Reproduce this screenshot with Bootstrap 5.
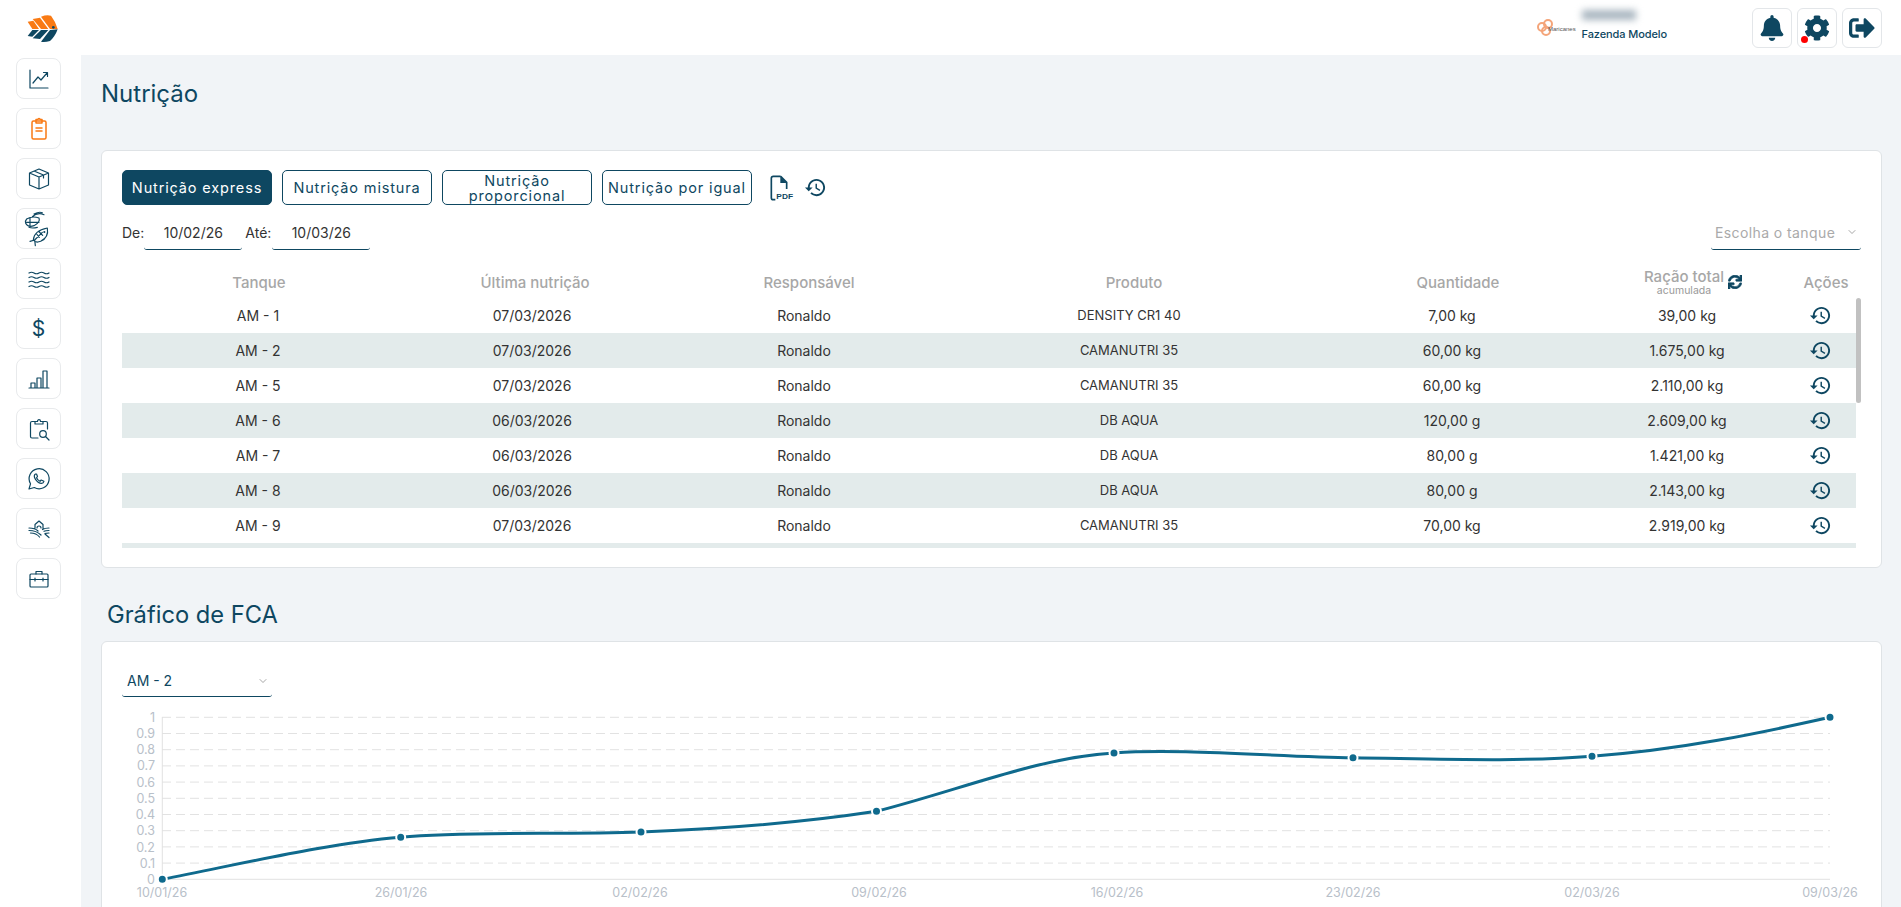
<!DOCTYPE html>
<html lang="pt-BR">
<head>
<meta charset="utf-8">
<title>Nutrição</title>
<link href="https://cdn.jsdelivr.net/npm/bootstrap@5.3.0/dist/css/bootstrap.min.css" rel="stylesheet">
<style>
html,body{height:100%;overflow:hidden}
body{font-family:Inter,"Noto Sans",sans-serif;background:#f1f4f7;color:#333;font-size:14px}
.app-side{width:81px;flex:none;background:#fff;height:100vh}
.side-logo{height:58px;padding:5px 0 0 15px}
.side-btn{width:45px;height:41px;margin:0 0 9px 16px;padding:0;border:1px solid #e8eaec;border-radius:8px;background:#fff;color:#0e4761;font-size:21px;line-height:1}
.side-btn svg{width:26px;height:26px;fill:none;stroke:#0e4761;stroke-width:1.2;stroke-linecap:round;stroke-linejoin:round;flex:none}
.side-btn.tall svg{width:50px;height:50px;stroke-width:3.5}
.side-btn.on svg{stroke:#f97a14;stroke-width:1.5}
.app-main{min-width:0;height:100vh;overflow:hidden}
.top-bar{height:55px;background:#fff;padding-right:19px}
.farm-logo{width:40px;height:20px;margin-right:5px}
.farm-info{margin:-5px 80px 0 0}
.farm-blur{width:54px;height:10px;background:#a9b6c0;filter:blur(3.500px);margin:0 0 8px 0}
.farm-name{font-size:11px;font-weight:500;color:#0e4761;line-height:13px;letter-spacing:-.1px}
.top-btn{width:40px;height:40px;padding:0;margin-left:5px;border:1px solid #e3e6e9;border-radius:6px;background:#fff}
.top-btn svg{width:26px;height:26px;fill:#0e4761}
.red-dot{width:7px;height:7px;border-radius:50%;background:#f00;left:3px;bottom:4px}
.content-wrap{padding:0 19px 0 20px}
.page-title{height:95px;padding-top:25px;margin:0;font-size:24px;font-weight:400;color:#0e4761;line-height:28px}
.sect-title{height:73px;padding:31px 0 0 6px;margin:0;font-size:23.700px;font-weight:400;color:#0e4761;line-height:32px}
.panel{border:1px solid #dfe3e6;border-radius:6px;background:#fff;padding:19px 20px}
.tab-row{gap:10px}
.tab-btn{width:150px;height:35px;padding:0 4px;font-size:14.500px;letter-spacing:.85px;line-height:15px;color:#0e4761;border:1px solid #0e4761;border-radius:5px;background:#fff}
.tab-btn.act{background:#0e4761;color:#fff}
.pdf-ico{width:24px;height:26px;margin-left:8px}
.hist-btn{width:23px;height:23px;fill:#0e4761}
.date-row{height:35px;margin-top:10px;margin-bottom:12px}
.date-lab{font-size:14px;color:#333}
.line-input{height:35px;padding:0 4px;border:0;border-bottom:1px solid #0e4761;border-radius:3px;background:transparent;font-size:14px;color:#333;text-align:center;box-shadow:none}
.d-w{width:98px;margin:0 3px 0 0}
.d-w2{margin-left:1px}
.sel-w{width:150px;height:35px;padding:0 20px 0 4px;border:0;border-bottom:1px solid #0e4761;border-radius:3px;font-size:14px;background-image:url("data:image/svg+xml,%3csvg xmlns='http://www.w3.org/2000/svg' viewBox='0 0 16 16'%3e%3cpath fill='none' stroke='%23888' stroke-linecap='round' stroke-linejoin='round' stroke-width='1.500' d='m2 5 6 6 6-6'/%3e%3c/svg%3e");background-size:8px;background-position:right 5px center}
.sel-ph{color:#aaa;letter-spacing:.4px}
.sel-val{color:#0e4761;padding-left:5px}
.t-head,.t-body{table-layout:fixed;margin:0;--bs-table-bg:transparent}
.t-head{width:1739px}
.t-body{width:1734px}
.t-head th{height:36px;padding:5px 0 0;border:0;color:#a7a7a7;font-weight:500;font-size:15px;text-align:center;vertical-align:middle;line-height:15px}
.t-head small{display:block;font-size:10.500px;font-weight:400;line-height:11px;margin-top:1px;color:#999}
.t-body td{height:35px;padding:0;border:0;text-align:center;vertical-align:middle;font-size:14px;color:#333}
.t-body td.prod-cell{font-size:13px}
.t-body tr:nth-child(even) td{background:#e3ebeb}
.h1c{width:274px}.h2c{width:278px}.h3c{width:270px}.h4c{width:380px}.h5c{width:268px}.h6c{width:202px}.h7c{width:67px}
.b1c{width:272px}.b2c{width:276px}.b3c{width:268px}.b4c{width:382px}.b5c{width:264px}.b6c{width:206px}.b7c{width:66px}
.t-head th.pr-a{padding-right:3px}
.t-body td.pr-b{padding-right:6px}
.tb-clip{height:250px;overflow:hidden}
.thumb{position:absolute;right:0;top:0;width:5px;height:105px;border-radius:3px;background:#c1c1c1}
.sync{width:14px;height:14px;fill:#0e4761;stroke:#0e4761;stroke-width:26;margin-left:4px;vertical-align:-2px}
.row-h{width:23px;height:23px;fill:#0e4761;vertical-align:middle}
.pos-lab{display:inline-block;vertical-align:middle}
.fca-sel{width:150px;height:32px;margin-top:4px;display:block}
.fca-chart{display:block;width:1740px;height:210px;margin-top:8px}
.panel-open{height:400px;padding-top:19px}
</style>
</head>
<body>
<div class="d-flex">
  <aside class="app-side">
    <div class="side-logo d-flex align-items-start">
      <svg width="60" height="50" viewBox="0 0 180 150" aria-label="Logo">
        <path fill="#f97a14" d="M38 50L55 47L72 72H52Z"/>
        <path fill="#0e4761" d="M52 75H72L52 95L38 93Z"/>
        <path fill="#f97a14" d="M53 42L75 38L100 72H78Z"/>
        <path fill="#0e4761" d="M78 75H100L75 102L53 100Z"/>
        <path fill="#f97a14" d="M78 35Q95 28 108 32Q122 50 128 72L105 72Z"/>
        <path fill="#0e4761" d="M105 75L128 73Q120 95 105 108Q90 112 78 110Z"/>
        <circle cx="115" cy="67" r="4" fill="#0e4761"/>
      </svg>
    </div>
    <button class="side-btn d-flex align-items-center justify-content-center" aria-label="Gráficos"><svg viewBox="0 0 26 26"><path d="M4 4v18h18"/><path d="M7 17l5-6 3 3 6-7M17.500 6.500H21.500V10.500"/></svg></button>
    <button class="side-btn on d-flex align-items-center justify-content-center" aria-label="Relatório"><svg viewBox="0 0 26 26"><rect x="6" y="5" width="14" height="18" rx="1.500"/><path d="M10 5V3.500h2c0-1.500 2-1.500 2 0h2V7h-6zM10 12h6M10 15h6"/></svg></button>
    <button class="side-btn d-flex align-items-center justify-content-center" aria-label="Estoque"><svg viewBox="0 0 26 26"><path d="M13 3l9.500 4v12L13 23l-9.500-4V7zM3.500 7L13 11l9.500-4M13 11v12M8 5l9.500 4v3"/></svg></button>
    <button class="side-btn tall d-flex align-items-center justify-content-center" aria-label="Espécies"><svg viewBox="0 0 150 150"><path d="M38 45Q55 35 75 42Q80 55 60 65Q42 72 35 58Q33 50 38 45ZM55 38Q70 24 90 32M60 30Q75 22 85 26M48 42V66M38 55H75M45 70Q55 74 70 70"/><path d="M58 108Q60 80 100 72Q105 100 80 112Q65 118 58 108ZM48 112L62 108L64 125M62 108L85 85M68 90L76 100M76 84L86 94"/><circle cx="91" cy="84" r="1.500"/></svg></button>
    <button class="side-btn d-flex align-items-center justify-content-center" aria-label="Água"><svg viewBox="0 0 26 26"><path d="M3 7q2.500-1.500 5 0t5 0 5 0 5 0M3 11.500q2.500-1.500 5 0t5 0 5 0 5 0M3 16q2.500-1.500 5 0t5 0 5 0 5 0M3 20.500q2.500-1.500 5 0t5 0 5 0 5 0"/></svg></button>
    <button class="side-btn d-flex align-items-center justify-content-center">$</button>
    <button class="side-btn d-flex align-items-center justify-content-center" aria-label="Barras"><svg viewBox="0 0 26 26"><path d="M3 22h20M5 22v-5h4v5M11 22V12h4v10M17 22V5h4v17"/></svg></button>
    <button class="side-btn d-flex align-items-center justify-content-center" aria-label="Busca"><svg viewBox="0 0 26 26" stroke-width="1.600"><path d="M12 22H6c-1 0-1.500-.5-1.500-1.500V7C4.500 6 5 5.500 6 5.500h3M17 5.500h3c1 0 1.500.5 1.500 1.500v6M9 8V5.500h2.500c0-2.500 3-2.500 3 0H17V8z"/><circle cx="17" cy="18" r="3.300"/><path d="M19.500 20.500L23 24"/></svg></button>
    <button class="side-btn d-flex align-items-center justify-content-center" aria-label="WhatsApp"><svg viewBox="0 0 26 26" stroke-width="1.600"><path d="M3 23l1.500-5.200A10 10 0 1 1 8.300 21.500z"/><path d="M9.500 8c-1.500 1-1.500 3 0 5.300 1.700 2.500 4 4 6 4 1.300 0 2.200-1 2.400-2l-2.700-1.300-1.200 1.300c-1.500-.7-2.800-2-3.500-3.500l1-1.300L10.500 8z"/></svg></button>
    <button class="side-btn d-flex align-items-center justify-content-center" aria-label="Fazenda"><svg viewBox="0 0 26 26"><path d="M9 12V8.500L13 5l4 3.500V13M11 12a2 2 0 0 1 4 0M3 12c4 0 7 1 9 3M3 14.500c5 0 9 1.500 12 4.500M4.500 17c4 0 7 1.500 9 4M23 12c-3 0-5 .5-6.500 1.500M23 14.500c-2 0-4 .2-5 .8M23 17c-2 0-3 0-4 .5M19 18l4 3.500"/></svg></button>
    <button class="side-btn d-flex align-items-center justify-content-center" aria-label="Negócios"><svg viewBox="0 0 26 26" stroke-width="1.400"><rect x="4" y="8" width="18" height="13" rx="1"/><path d="M10 8V5.500h6V8M4 13.500h18M9 12v3M17 12v3"/></svg></button>
  </aside>
  <div class="app-main flex-grow-1">
    <header class="top-bar d-flex align-items-center justify-content-end">
      <svg class="farm-logo" viewBox="0 0 40 20" aria-label="Maricanes">
        <circle cx="5" cy="9" r="4" fill="none" stroke="#f4a57a" stroke-width="2"/>
        <circle cx="11" cy="6" r="4" fill="none" stroke="#f4a57a" stroke-width="2"/>
        <circle cx="9" cy="13" r="4" fill="none" stroke="#f4a57a" stroke-width="2"/>
        <text x="11" y="13" font-size="6" fill="#555" font-family="Liberation Sans">Maricanes</text>
      </svg>
      <div class="farm-info">
        <div class="farm-blur"></div>
        <div class="farm-name">Fazenda Modelo</div>
      </div>
      <button class="top-btn d-flex align-items-center justify-content-center" aria-label="Notificações"><svg viewBox="0 0 448 512"><path d="M224 512c35.320 0 63.970-28.650 63.970-64H160.030c0 35.350 28.650 64 63.970 64zm215.390-149.710c-19.320-20.760-55.470-51.990-55.470-154.290 0-77.700-54.480-139.900-127.940-155.160V32c0-17.670-14.320-32-31.980-32s-31.980 14.330-31.980 32v20.840C118.560 68.100 64.080 130.300 64.080 208c0 102.300-36.150 133.530-55.470 154.290-6 6.450-8.660 14.160-8.610 21.710.11 16.400 12.980 32 32.100 32h383.800c19.120 0 32-15.600 32.100-32 .05-7.550-2.610-15.270-8.610-21.710z"/></svg></button>
      <button class="top-btn d-flex align-items-center justify-content-center position-relative" aria-label="Configurações"><svg viewBox="0 0 512 512"><path d="M487.400 315.700l-42.600-24.600c4.300-23.200 4.300-47 0-70.200l42.600-24.600c4.900-2.800 7.100-8.600 5.500-14-11.100-35.600-30-67.800-54.700-94.600-3.800-4.100-10-5.100-14.800-2.300L380.800 110c-17.900-15.400-38.500-27.300-60.800-35.100V25.800c0-5.600-3.900-10.500-9.400-11.700-36.700-8.200-74.300-7.800-109.200 0-5.500 1.200-9.400 6.100-9.400 11.700V75c-22.200 7.900-42.800 19.800-60.800 35.100L88.700 85.500c-4.900-2.800-11-1.900-14.800 2.300-24.700 26.700-43.600 58.900-54.700 94.600-1.700 5.400.6 11.200 5.500 14L67.300 221c-4.300 23.200-4.300 47 0 70.200l-42.600 24.600c-4.900 2.800-7.100 8.600-5.500 14 11.100 35.600 30 67.800 54.700 94.600 3.800 4.100 10 5.100 14.800 2.300l42.600-24.600c17.900 15.400 38.500 27.300 60.800 35.100v49.200c0 5.600 3.900 10.500 9.400 11.700 36.700 8.200 74.300 7.800 109.200 0 5.500-1.200 9.400-6.100 9.400-11.700v-49.200c22.200-7.900 42.800-19.800 60.800-35.100l42.600 24.600c4.900 2.800 11 1.900 14.800-2.300 24.700-26.700 43.600-58.900 54.700-94.600 1.500-5.500-.7-11.300-5.600-14.100zM256 336c-44.100 0-80-35.900-80-80s35.900-80 80-80 80 35.900 80 80-35.900 80-80 80z"/></svg><span class="red-dot position-absolute"></span></button>
      <button class="top-btn d-flex align-items-center justify-content-center" aria-label="Sair"><svg viewBox="0 0 512 512"><path d="M497 273L329 441c-15 15-41 4.500-41-17v-96H152c-13.300 0-24-10.700-24-24v-96c0-13.300 10.700-24 24-24h136V88c0-21.400 25.900-32 41-17l168 168c9.300 9.400 9.300 24.600 0 34zM192 436v-40c0-6.600-5.400-12-12-12H96c-17.700 0-32-14.300-32-32V160c0-17.700 14.300-32 32-32h84c6.600 0 12-5.400 12-12V76c0-6.600-5.400-12-12-12H96c-53 0-96 43-96 96v192c0 53 43 96 96 96h84c6.600 0 12-5.400 12-12z"/></svg></button>
    </header>
    <div class="content-wrap">
      <h1 class="page-title">Nutrição</h1>
      <section class="panel">
        <div class="d-flex align-items-center tab-row">
          <button class="tab-btn act">Nutrição express</button>
          <button class="tab-btn">Nutrição mistura</button>
          <button class="tab-btn">Nutrição proporcional</button>
          <button class="tab-btn">Nutrição por igual</button>
          <svg class="pdf-ico" viewBox="36 30 72 78" aria-label="PDF">
            <path d="M68 34H46Q40 34 40 40V98Q40 104 46 104H52M68 34L86 52V72" fill="none" stroke="#0e4761" stroke-width="5"/>
            <path d="M67 35V54H86Z" fill="#0e4761"/>
            <text x="55" y="102" font-size="24" font-weight="700" fill="#0e4761" font-family="Liberation Sans" textLength="50" lengthAdjust="spacingAndGlyphs">PDF</text>
          </svg>
          <svg class="hist-btn" viewBox="0 0 24 24"><use href="#hist"/></svg>
        </div>
        <div class="date-row d-flex align-items-center">
          <span class="date-lab">De:</span>
          <input class="form-control line-input d-w" value="10/02/26" aria-label="De">
          <span class="date-lab">Até:</span>
          <input class="form-control line-input d-w d-w2" value="10/03/26" aria-label="Até">
          <select class="form-select sel-w sel-ph ms-auto" aria-label="Tanque"><option>Escolha o tanque</option></select>
        </div>
        <table class="table t-head">
          <colgroup><col class="h1c"><col class="h2c"><col class="h3c"><col class="h4c"><col class="h5c"><col class="h6c"><col class="h7c"></colgroup>
          <thead><tr>
            <th>Tanque</th><th>Última nutrição</th><th>Responsável</th><th>Produto</th><th>Quantidade</th>
            <th><span class="pos-lab">Ração total<small>acumulada</small></span><svg class="sync" viewBox="0 0 512 512"><path d="M440.650 12.570l4 82.770A247.160 247.160 0 0 0 255.830 8C134.730 8 33.910 94.920 12.290 209.820A12 12 0 0 0 24.090 224h49.050a12 12 0 0 0 11.670-9.260 175.910 175.910 0 0 1 317-56.940l-101.460-4.860a12 12 0 0 0-12.570 12v47.410a12 12 0 0 0 12 12H500a12 12 0 0 0 12-12V12a12 12 0 0 0-12-12h-47.370a12 12 0 0 0-11.980 12.570zM255.830 432a175.610 175.610 0 0 1-146-77.800l101.800 4.870a12 12 0 0 0 12.570-12v-47.400a12 12 0 0 0-12-12H12a12 12 0 0 0-12 12V500a12 12 0 0 0 12 12h47.350a12 12 0 0 0 12-12.600l-4.150-82.570A247.170 247.170 0 0 0 255.830 504c121.110 0 221.930-86.920 243.550-201.820a12 12 0 0 0-11.800-14.180h-49.050a12 12 0 0 0-11.670 9.260A175.860 175.860 0 0 1 255.830 432z"/></svg></th>
            <th class="pr-a">Ações</th>
          </tr></thead>
        </table>
        <div class="tb-clip position-relative">
          <table class="table t-body">
            <colgroup><col class="b1c"><col class="b2c"><col class="b3c"><col class="b4c"><col class="b5c"><col class="b6c"><col class="b7c"></colgroup>
            <tbody>
              <tr><td>AM - 1</td><td>07/03/2026</td><td>Ronaldo</td><td class="prod-cell">DENSITY CR1 40</td><td>7,00 kg</td><td>39,00 kg</td><td class="pr-b"><svg class="row-h" viewBox="0 0 24 24"><use href="#hist"/></svg></td></tr>
              <tr><td>AM - 2</td><td>07/03/2026</td><td>Ronaldo</td><td class="prod-cell">CAMANUTRI 35</td><td>60,00 kg</td><td>1.675,00 kg</td><td class="pr-b"><svg class="row-h" viewBox="0 0 24 24"><use href="#hist"/></svg></td></tr>
              <tr><td>AM - 5</td><td>07/03/2026</td><td>Ronaldo</td><td class="prod-cell">CAMANUTRI 35</td><td>60,00 kg</td><td>2.110,00 kg</td><td class="pr-b"><svg class="row-h" viewBox="0 0 24 24"><use href="#hist"/></svg></td></tr>
              <tr><td>AM - 6</td><td>06/03/2026</td><td>Ronaldo</td><td class="prod-cell">DB AQUA</td><td>120,00 g</td><td>2.609,00 kg</td><td class="pr-b"><svg class="row-h" viewBox="0 0 24 24"><use href="#hist"/></svg></td></tr>
              <tr><td>AM - 7</td><td>06/03/2026</td><td>Ronaldo</td><td class="prod-cell">DB AQUA</td><td>80,00 g</td><td>1.421,00 kg</td><td class="pr-b"><svg class="row-h" viewBox="0 0 24 24"><use href="#hist"/></svg></td></tr>
              <tr><td>AM - 8</td><td>06/03/2026</td><td>Ronaldo</td><td class="prod-cell">DB AQUA</td><td>80,00 g</td><td>2.143,00 kg</td><td class="pr-b"><svg class="row-h" viewBox="0 0 24 24"><use href="#hist"/></svg></td></tr>
              <tr><td>AM - 9</td><td>07/03/2026</td><td>Ronaldo</td><td class="prod-cell">CAMANUTRI 35</td><td>70,00 kg</td><td>2.919,00 kg</td><td class="pr-b"><svg class="row-h" viewBox="0 0 24 24"><use href="#hist"/></svg></td></tr>
              <tr><td colspan="7"></td></tr>
            </tbody>
          </table>
          <div class="thumb"></div>
        </div>
      </section>
      <h2 class="sect-title">Gráfico de FCA</h2>
      <section class="panel panel-open">
        <select class="form-select sel-w sel-val fca-sel" aria-label="Tanque"><option>AM - 2</option></select>
        <svg class="fca-chart" viewBox="122 705 1740 210" font-family="Inter,sans-serif" font-size="12.500" fill="#b8c0c9">
          <g stroke="#e2e2e2" stroke-dasharray="9 5" fill="none">
            <path d="M162 717.300H1830M162 733.500H1830M162 749.700H1830M162 765.900H1830M162 782.100H1830M162 798.300H1830M162 814.500H1830M162 830.700H1830M162 846.900H1830M162 863.100H1830"/>
          </g>
          <path d="M162.300 717V879.300H1830" stroke="#e2e2e2" fill="none"/>
          <g text-anchor="end">
            <text x="155" y="722">1</text><text x="155" y="738">0.9</text><text x="155" y="754">0.8</text><text x="155" y="770">0.7</text><text x="155" y="786.500">0.6</text><text x="155" y="803">0.5</text><text x="155" y="819">0.4</text><text x="155" y="835">0.3</text><text x="155" y="851.500">0.2</text><text x="155" y="867.500">0.1</text><text x="155" y="883.500">0</text>
          </g>
          <g text-anchor="middle">
            <text x="162" y="897">10/01/26</text><text x="401" y="897">26/01/26</text><text x="640" y="897">02/02/26</text><text x="879" y="897">09/02/26</text><text x="1117" y="897">16/02/26</text><text x="1353" y="897">23/02/26</text><text x="1592" y="897">02/03/26</text><text x="1830" y="897">09/03/26</text>
          </g>
          <path fill="none" stroke="#0f6a8d" stroke-width="3" d="M162 879.300C250 862 330 843 400.700 837.200C470 831 560 835 641 832C720 829 800 823 876.500 811.300C960 790 1040 757 1114 753C1180 748 1280 757 1353 757.800C1440 759 1520 762 1592 756.200C1680 750 1760 733 1830 717.300"/>
          <g fill="#0f6a8d" stroke="#fff" stroke-width="2">
            <circle cx="162.300" cy="879.300" r="4.500"/><circle cx="400.700" cy="837.200" r="4.500"/><circle cx="641" cy="832" r="4.500"/><circle cx="876.500" cy="811.300" r="4.500"/><circle cx="1114" cy="753" r="4.500"/><circle cx="1353" cy="757.800" r="4.500"/><circle cx="1592" cy="756.200" r="4.500"/><circle cx="1830" cy="717.300" r="4.500"/>
          </g>
        </svg>
      </section>
    </div>
  </div>
</div>
<svg width="0" height="0" class="position-absolute"><symbol id="hist" viewBox="0 0 24 24"><path d="M13 3c-4.970 0-9 4.030-9 9H1l3.890 3.890.07.14L9 12H6c0-3.870 3.130-7 7-7s7 3.130 7 7-3.130 7-7 7c-1.930 0-3.680-.79-4.940-2.060l-1.420 1.420C8.270 19.990 10.510 21 13 21c4.970 0 9-4.030 9-9s-4.030-9-9-9zm-1 5v5l4.280 2.540.72-1.210-3.500-2.080V8H12z"/></symbol></svg>
<script src="https://cdn.jsdelivr.net/npm/bootstrap@5.3.0/dist/js/bootstrap.bundle.min.js"></script>
</body>
</html>
